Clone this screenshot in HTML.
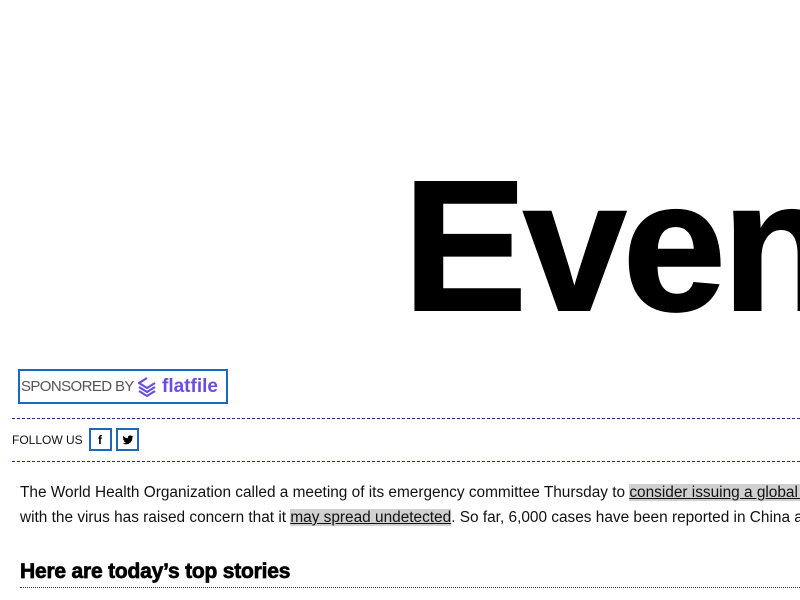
<!DOCTYPE html>
<html><head><style>
html,body{margin:0;padding:0;background:#fff;width:800px;height:600px;overflow:hidden;font-family:"Liberation Sans",Arial,sans-serif;}
.wrap{position:absolute;left:0;top:0;width:800px;height:600px;overflow:hidden;}
.hero{position:absolute;left:403px;top:154px;font-size:186px;font-weight:bold;letter-spacing:-4px;line-height:1;white-space:nowrap;color:#000;-webkit-text-stroke:2px #000;}
.spon{position:absolute;left:18px;top:369px;width:206px;height:31px;border:2px solid #1e67c0;}
.spon .t{position:absolute;left:1px;top:7px;font-size:15px;color:#555;letter-spacing:-0.6px;}
.spon .f{position:absolute;left:142px;top:5px;font-size:19px;color:#6a4ee0;font-weight:bold;letter-spacing:0;}
.dash{position:absolute;left:12px;width:788px;border-top:1px dashed #2a2a8a;}
.follow{position:absolute;left:12px;top:433px;font-size:12px;color:#111;}
.soc{position:absolute;top:428px;width:23px;height:23px;border:2px solid #1e67c0;box-sizing:border-box;}
.p{position:absolute;left:20px;font-size:15.4px;color:#111;white-space:nowrap;line-height:25px;}
.hl{background:#d0d0d0;text-decoration:underline;}
h2{position:absolute;left:20px;top:560px;margin:0;font-size:21px;font-weight:900;letter-spacing:-0.2px;white-space:nowrap;-webkit-text-stroke:0.7px #000;}
.dot{position:absolute;left:20px;top:587px;width:780px;border-top:1px dotted #333;}
</style></head><body><div class="wrap">
<div class="hero">Even</div>
<div class="spon"><span class="t">SPONSORED BY</span>
<svg style="position:absolute;left:115px;top:5px" width="24" height="22" viewBox="0 0 24 22" fill="none" stroke="#6a4ee0" stroke-width="2.2" stroke-linejoin="round"><path d="M12 2L4 7l8 5 8-5"/><path d="M4 11l8 5 8-5"/><path d="M4 15l8 5 8-5"/></svg>
<span class="f">flatfile</span></div>
<div class="dash" style="top:418px"></div>
<div class="follow">FOLLOW US</div>
<div class="soc" style="left:89px"><span style="position:absolute;left:7px;top:3px;font-size:12px;font-weight:bold">f</span></div>
<div class="soc" style="left:116px"><svg style="position:absolute;left:4px;top:4px" width="12" height="12" viewBox="0 0 24 24"><path fill="#000" d="M23 5c-.8.4-1.700.6-2.600.7.9-.6 1.600-1.400 2-2.500-.9.5-1.900.9-2.900 1.100A4.500 4.500 0 0 0 11.800 8.400 12.800 12.800 0 0 1 2.500 3.700a4.500 4.500 0 0 0 1.400 6c-.7 0-1.400-.2-2-.6 0 2.200 1.500 4 3.600 4.400-.7.2-1.400.2-2 .1.6 1.800 2.200 3.100 4.200 3.100A9 9 0 0 1 1 18.600 12.800 12.800 0 0 0 20.700 7.200V6.600c.9-.6 1.700-1.400 2.300-2.300z"/></svg></div>
<div class="dash" style="top:461px"></div>
<div class="p" style="top:480px">The World Health Organization called a meeting of its emergency committee Thursday to <span class="hl">consider issuing a global health emergency</span></div>
<div class="p" style="top:505px">with the virus has raised concern that it <span class="hl">may spread undetected</span>. So far, 6,000 cases have been reported in China and</div>
<h2>Here are today’s top stories</h2>
<div class="dot"></div>
</div></body></html>
